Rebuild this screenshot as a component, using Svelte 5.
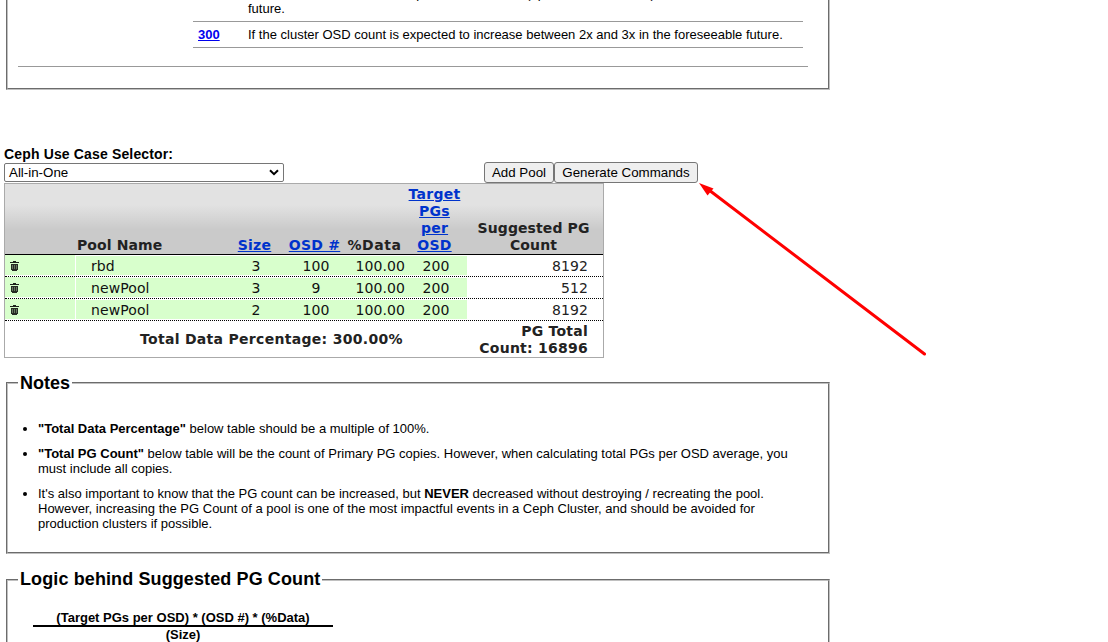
<script>
  const pools = [
    { name: 'rbd', size: 3, osd: 100, data: '100.00', target: 200, count: 8192 },
    { name: 'newPool', size: 3, osd: 9, data: '100.00', target: 200, count: 512 },
    { name: 'newPool', size: 2, osd: 100, data: '100.00', target: 200, count: 8192 }
  ];
</script>

<main>
  <section class="key">
    <div class="options">
      <div class="option first">
        <span></span>
        <p>If the cluster OSD count is expected to increase (up to double the size) in the foreseeable<br />future.</p>
      </div>
      <div class="option">
        <a href="#300">300</a>
        <p>If the cluster OSD count is expected to increase between 2x and 3x in the foreseeable future.</p>
      </div>
    </div>
    <div class="rule"></div>
  </section>

  <b class="label">Ceph Use Case Selector:</b>
  <div class="controls">
    <div class="select">
      <span>All-in-One</span>
      <svg width="10" height="7" viewBox="0 0 10 7"><path d="M1 1.2 5 5.2 9 1.2" fill="none" stroke="#000" stroke-width="2" /></svg>
    </div>
    <button class="add">Add Pool</button><button class="gen">Generate Commands</button>
  </div>

  <div class="table">
    <div class="row head">
      <span></span>
      <span class="h-name">Pool Name</span>
      <span class="h-size"><a href="#size">Size</a></span>
      <span class="h-osd"><a href="#osd">OSD #</a></span>
      <span class="h-data">%Data</span>
      <span class="h-target"><a href="#target">Target<br />PGs<br />per<br />OSD</a></span>
      <span class="h-count">Suggested PG<br />Count</span>
    </div>
    {#each pools as p}
      <div class="row body">
        <span class="c del">
          <svg width="9" height="10" viewBox="0 0 9 10">
            <path d="M0 1.500h9M3 .5h3" stroke="#1c211a" />
            <path d="M1 3h7v6h-1v1H2V9H1z" fill="#262b24" />
            <path d="M2.500 4v4M4.500 4v4M6.500 4v4" stroke="#87997f" stroke-width=".7" />
          </svg>
        </span>
        <span class="c name">{p.name}</span>
        <span class="c">{p.size}</span>
        <span class="c">{p.osd}</span>
        <span class="c data">{p.data}</span>
        <span class="c target">{p.target}</span>
        <span class="count">{p.count}</span>
      </div>
    {/each}
    <div class="foot">
      <b class="percent">Total Data Percentage: 300.00%</b>
      <b class="total">PG Total<br />Count: 16896</b>
    </div>
  </div>

  <section class="box notes">
    <h2><span>Notes</span></h2>
    <ul>
      <li><b>"Total Data Percentage"</b> below table should be a multiple of 100%.</li>
      <li><b>"Total PG Count"</b> below table will be the count of Primary PG copies. However, when calculating total PGs per OSD average, you<br />must include all copies.</li>
      <li>It's also important to know that the PG count can be increased, but <b>NEVER</b> decreased without destroying / recreating the pool.<br />However, increasing the PG Count of a pool is one of the most impactful events in a Ceph Cluster, and should be avoided for<br />production clusters if possible.</li>
    </ul>
  </section>

  <section class="box logic">
    <h2><span>Logic behind Suggested PG Count</span></h2>
    <div class="fraction">
      <b class="num">(Target PGs per OSD) * (OSD #) * (%Data)</b>
      <b class="den">(Size)</b>
    </div>
  </section>

  <svg class="arrow" width="240" height="190" viewBox="690 170 240 190">
    <path d="M709 190 924.500 354" stroke="#f00" stroke-width="3" stroke-linecap="round" />
    <path d="M699 183 713.500 188.500 707.500 195.500z" fill="#f00" />
  </svg>
</main>

<style>
  :global(body) { margin: 0; background: #fff; }
  main {
    position: relative;
    width: 1108px;
    height: 642px;
    overflow: hidden;
    display: flex;
    flex-direction: column;
    font: 13px/15px "Liberation Sans", Arial, sans-serif;
    color: #000;
    white-space: nowrap;
  }
  p, h2, ul { margin: 0; padding: 0; }

  .key {
    box-sizing: border-box;
    width: 824px;
    height: 90px;
    margin-left: 6px;
    border: 2px groove #c0c0c0;
    border-top: 0;
    overflow: hidden;
    flex: none;
  }
  .options { width: 610px; margin-left: 185px; }
  .option {
    display: grid;
    grid-template-columns: 55px 1fr;
    box-sizing: border-box;
    height: 26px;
    padding-top: 5px;
    border-bottom: 1px solid #999;
  }
  .option.first { height: 22px; padding: 0; }
  .first p { margin-top: -14px; }
  .option a { padding-left: 5px; color: #00e; font-weight: bold; font-size: 13px; }
  .rule { width: 790px; height: 1px; margin: 18px 0 0 10px; background: #999; }

  .label { margin: 56px 0 0 4px; height: 16px; line-height: 16px; font-size: 14px; letter-spacing: .15px; }
  .controls { display: flex; height: 21px; margin: 0 0 0 4px; flex: none; }
  .select {
    box-sizing: border-box;
    display: flex;
    align-items: center;
    justify-content: space-between;
    width: 280px;
    height: 19px;
    margin: 1px 200px 0 0;
    padding: 0 4px;
    border: 1px solid #767676;
    border-radius: 2px;
    font-size: 13.33px;
  }
  button {
    box-sizing: border-box;
    height: 21px;
    padding: 0;
    border: 1px solid #767676;
    border-radius: 3px;
    background: #efefef;
    color: #000;
    font: 13.33px "Liberation Sans", Arial, sans-serif;
  }
  .add { width: 70px; }
  .gen { width: 144px; }

  .table {
    box-sizing: border-box;
    width: 600px;
    height: 175px;
    margin: 0 0 0 4px;
    border: 1px solid #aaa;
    font: 14px/17px "DejaVu Sans", Verdana, sans-serif;
    letter-spacing: .1px;
    color: #222;
    flex: none;
  }
  .row {
    display: grid;
    grid-template-columns: 70px 150px 62px 58px 60px 62px 1fr;
  }
  .head {
    box-sizing: border-box;
    height: 71px;
    align-items: end;
    border-bottom: 1px solid #000;
    background: linear-gradient(#e2e2e2 30%, #cacaca 65%);
    font-weight: bold;
    text-align: center;
  }
  .head a { color: #03c; letter-spacing: .25px; }
  .head .h-name { text-align: left; padding-left: 2px; }
  .h-size { padding-right: 3px; }
  .h-osd { padding-right: 3px; }
  .h-data { padding-right: 1px; letter-spacing: .6px; }
  .h-count { padding-right: 3px; }
  .h-target { padding-right: 3px; }
  .body {
    box-sizing: border-box;
    height: 22px;
    border-bottom: 1px dotted #000;
    line-height: 22px;
    text-align: center;
  }
  .c { box-sizing: border-box; height: 19px; margin-top: 1px; line-height: 20px; background: #d8ffcc; color: #111; }
  .del { height: 20px; margin: 0; display: flex; align-items: center; padding: 2px 0 0 5px; }
  .name { text-align: left; margin-left: 1px; padding-left: 15px; }
  .data { text-align: right; }
  .count { text-align: right; padding-right: 15px; }
  .foot { display: flex; justify-content: space-between; align-items: center; height: 36px; letter-spacing: .3px; }
  .percent { padding-left: 135px; }
  .total { text-align: right; padding: 2px 15px 0 0; letter-spacing: .25px; }

  .box {
    box-sizing: border-box;
    width: 824px;
    margin-left: 6px;
    border: 2px groove #c0c0c0;
    flex: none;
  }
  .notes { height: 172px; margin-top: 24px; }
  .logic { height: 90px; margin-top: 25px; }
  h2 { height: 20px; margin: -11px 0 0 10px; font-size: 18px; line-height: 20px; }
  .logic h2 { margin-top: -12px; letter-spacing: .11px; }
  h2 span { display: inline-block; padding: 0 2px; background: #fff; }
  ul { margin: 28px 0 0 30px; list-style: none; }
  li { position: relative; margin-bottom: 10px; }
  li::before { content: ""; position: absolute; left: -15px; top: 6px; width: 4px; height: 4px; border-radius: 50%; background: #000; }
  .fraction { width: 300px; margin: 19px 0 0 25px; text-align: center; font-size: 13px; }
  .fraction b { display: block; }
  .num { height: 17px; line-height: 19px; border-bottom: 2px solid #000; }
  .den { line-height: 16px; }
  .arrow { position: absolute; left: 690px; top: 170px; }
</style>
